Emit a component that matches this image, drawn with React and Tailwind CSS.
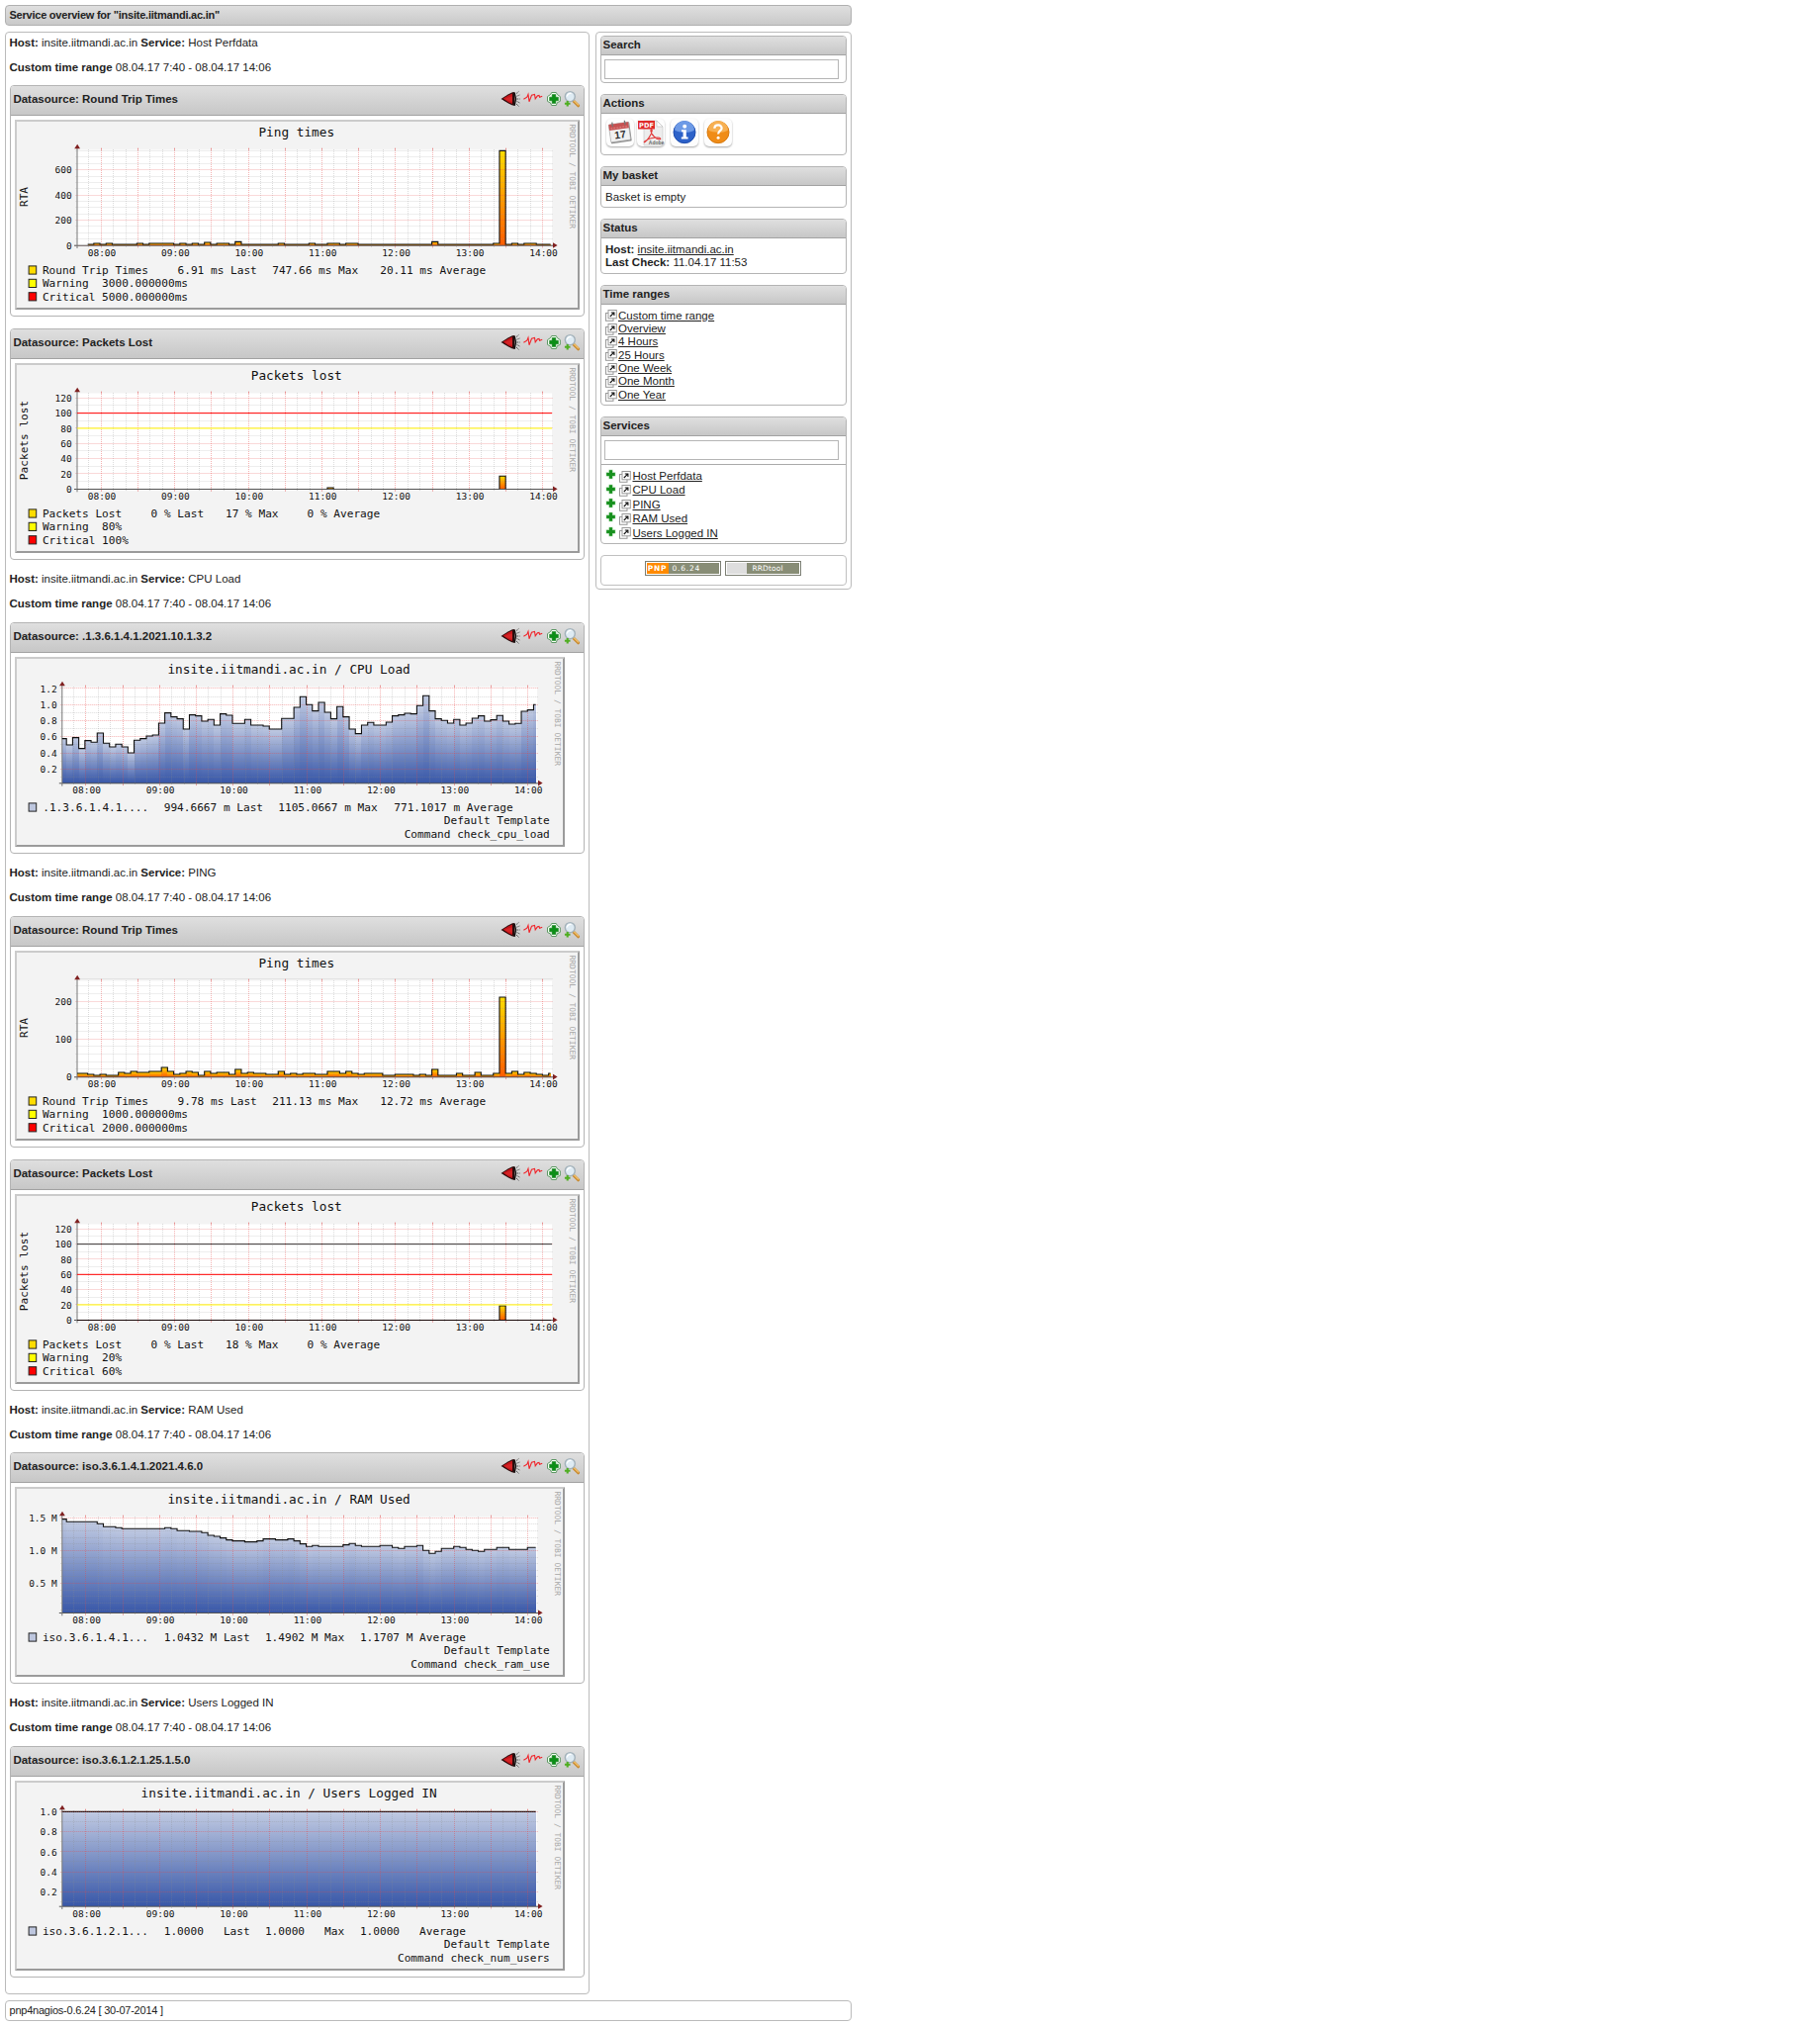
import React from "react";

const HOURS = ["08:00", "09:00", "10:00", "11:00", "12:00", "13:00", "14:00"];
const MONO = "'DejaVu Sans Mono', monospace";
const STEP = 6.214;

/* Height samples, in thirds of a pixel above the zero line, one per five minutes. */
const cpuSamples = [
  381, 400, 378, 411, 387, 392, 364, 395, 406, 398, 406, 424, 386, 381, 373, 370, 334, 303, 315, 321, 352, 309, 312,
  328, 323, 340, 306, 310, 335, 335, 323, 340, 340, 343, 352, 352, 320, 320, 286, 254, 278, 297, 271, 301, 321, 284,
  315, 352, 366, 340, 332, 340, 340, 331, 312, 309, 304, 306, 281, 251, 297, 321, 326, 334, 323, 340, 334, 319, 312,
  328, 324, 311, 328, 337, 335, 298, 294, 278,
].map((v) => 516 - v);
const ramSamples = [
  197, 205, 205, 205, 205, 205, 211, 220, 220, 223, 226, 226, 226, 226, 226, 226, 226, 223, 226, 232, 232, 234, 234,
  238, 246, 249, 254, 260, 263, 263, 266, 266, 263, 257, 257, 260, 260, 257, 263, 272, 280, 277, 280, 280, 280, 280,
  275, 271, 277, 280, 280, 280, 277, 277, 283, 286, 280, 280, 277, 292, 301, 295, 286, 286, 280, 283, 289, 292, 295,
  289, 289, 283, 283, 289, 289, 289, 283, 283,
].map((v) => 481 - v);
const pingSamples = [
  493, 493, 496, 499, 496, 499, 499, 490, 493, 487, 490, 490, 487, 487, 475, 487, 496, 493, 487, 490, 499, 487, 493,
  490, 490, 496, 481, 493, 490, 493, 493, 496, 496, 487, 496, 493, 496, 493, 493, 496, 496, 487, 487, 493, 487, 493,
  496, 493, 493, 493, 499, 499, 496, 496, 496, 499, 496, 499, 481, 499, 499, 499, 493, 499, 499, 490, 499, 499, 493,
  262, 493, 487, 496, 490, 493, 496, 499, 493,
].map((v) => 504 - v);

function sparse(base, skip, peaks) {
  return Array.from({ length: 78 }, (_, i) => {
    if (i < skip) return null;
    return peaks[i] !== undefined ? peaks[i] : base;
  });
}
const hostPing = sparse(3, 2, {
  3: 6, 5: 6, 10: 6, 12: 6, 13: 6, 14: 6, 15: 6, 17: 6, 19: 6, 21: 9, 23: 6, 24: 6, 26: 11, 33: 6, 38: 6, 41: 6,
  42: 6, 44: 6, 45: 6, 58: 11, 68: 6, 69: 287, 71: 6, 73: 6, 74: 6,
});
const hostLoss = sparse(0, 2, { 41: 4, 69: 39 });
const pingLoss = sparse(0, 0, { 69: 43 });
const users = Array.from({ length: 78 }, () => 287);

const WARM = { top: "#ffdc00", bottom: "#ff5c00" };
const COOL = { top: "#c0cae2", bottom: "#3857a8" };

const yellowRed = (w, c) => [
  ["#ffff00", `Warning  ${w}`],
  ["#ff0000", `Critical ${c}`],
];

const charts = {
  hostPing: {
    title: "Ping times", axis: "RTA", wide: true, zero: 127, unit: 25.45 / 200, minor: 50, major: 200, max: 750,
    labels: [0, 200, 400, 600], data: hostPing, ramp: WARM, swatch: "#ffdc00",
    parts: [[27.9, "Round Trip Times"], [164.5, "6.91 ms Last"], [260.2, "747.66 ms Max"], [369.2, "20.11 ms Average"]],
    extra: yellowRed("3000.000000ms", "5000.000000ms"),
  },
  hostLoss: {
    title: "Packets lost", axis: "Packets lost", wide: true, zero: 127.3, unit: 15.33 / 20, minor: 10, major: 20, max: 120,
    labels: [0, 20, 40, 60, 80, 100, 120], data: hostLoss, ramp: WARM, swatch: "#ffdc00",
    rules: [[100, "#ff0000"], [80, "#ffff00"]], baseline: "#555",
    parts: [[27.9, "Packets Lost"], [137.6, "0 % Last"], [213, "17 % Max"], [295.6, "0 % Average"]],
    extra: yellowRed("80%", "100%"),
  },
  cpu: {
    title: "insite.iitmandi.ac.in / CPU Load", zero: 127.6, offset: -0.024, unit: 16.27 / 0.2, minor: 0.1, major: 0.2, max: 1.2,
    labels: [0.2, 0.4, 0.6, 0.8, 1.0, 1.2], data: cpuSamples, ramp: COOL, swatch: "#bdc6de",
    parts: [[28.2, ".1.3.6.1.4.1...."], [150.7, "994.6667 m Last"], [266.3, "1105.0667 m Max"], [383.3, "771.1017 m Average"]],
    right: ["Default Template", "Command check_cpu_load"],
  },
  ping: {
    title: "Ping times", axis: "RTA", wide: true, zero: 127.6, unit: 38.3 / 100, minor: 20, major: 100, max: 250,
    labels: [0, 100, 200], data: pingSamples, ramp: WARM, swatch: "#ffdc00",
    parts: [[27.9, "Round Trip Times"], [164.5, "9.78 ms Last"], [260.2, "211.13 ms Max"], [369.2, "12.72 ms Average"]],
    extra: yellowRed("1000.000000ms", "2000.000000ms"),
  },
  pingLoss: {
    title: "Packets lost", axis: "Packets lost", wide: true, zero: 127.3, unit: 15.33 / 20, minor: 10, major: 20, max: 120,
    labels: [0, 20, 40, 60, 80, 100, 120], data: pingLoss, ramp: WARM, swatch: "#ffdc00",
    rules: [[100, "#333333"], [60, "#ff0000"], [20, "#ffff00"]], baseline: "#1a0a0a",
    parts: [[27.9, "Packets Lost"], [137.6, "0 % Last"], [213, "18 % Max"], [295.6, "0 % Average"]],
    extra: yellowRed("20%", "60%"),
  },
  ram: {
    title: "insite.iitmandi.ac.in / RAM Used", zero: 127.3, offset: -0.053, unit: 33.2 / 0.5, minor: 0.1, major: 0.5, max: 1.5,
    labels: [0.5, 1.0, 1.5], suffix: " M", data: ramSamples, ramp: COOL, swatch: "#bdc6de",
    parts: [[27.9, "iso.3.6.1.4.1..."], [150.7, "1.0432 M Last"], [252.9, "1.4902 M Max"], [348.9, "1.1707 M Average"]],
    right: ["Default Template", "Command check_ram_use"],
  },
  users: {
    title: "insite.iitmandi.ac.in / Users Logged IN", zero: 127, offset: -0.055, unit: 20.25 / 0.2, minor: 0.1, major: 0.2, max: 1.0,
    labels: [0.2, 0.4, 0.6, 0.8, 1.0], data: users, ramp: COOL, swatch: "#bdc6de",
    parts: [[27.9, "iso.3.6.1.2.1..."], [150.7, "1.0000   Last"], [252.9, "1.0000   Max"], [348.9, "1.0000   Average"]],
    right: ["Default Template", "Command check_num_users"],
  },
};

function Mono({ x, y, adv, anchor, fill = "#111", children, transform }) {
  const text = String(children);
  return (
    <text
      x={x}
      y={y}
      transform={transform}
      fontFamily={MONO}
      fontSize={adv / 0.602}
      textAnchor={anchor}
      fill={fill}
      className="whitespace-pre"
    >
      {text}
    </text>
  );
}

function Chart({ id }) {
  const c = charts[id];
  const w = c.wide ? 571 : 556;
  const left = c.wide ? 63 : 47.8;
  const right = c.wide ? 542 : 527;
  const first = left + 4.4;
  const eight = c.wide ? 87.2 : 71.9;
  const top = 30.5;
  const zero = c.zero;
  const yOf = (v) => zero - (v + (c.offset || 0)) * c.unit;
  const decimals = c.offset ? 1 : 0;
  const labelRight = c.wide ? 57.8 : 42.8;

  const vlines = [];
  for (let m = -10; m <= 360; m += 10) {
    vlines.push({ x: Math.round(eight + (m * 74.42) / 60 - 0.5) + 0.5, red: m % 30 === 0 });
  }
  const hlines = [];
  const n = Math.round(c.max / c.minor);
  for (let i = 0; i <= n; i++) {
    const v = i * c.minor;
    if (i === 0 && c.offset) continue;
    hlines.push({ y: Math.round(yOf(v) - 0.5) + 0.5, red: i % Math.round(c.major / c.minor) === 0 });
  }

  const cols = c.data.map((v, i) => ({
    v,
    x: i === 0 ? left : first + (i - 1) * STEP,
    x2: Math.min(i === 77 ? right - 0.4 : first + i * STEP, right - 0.4),
  }));
  const shown = cols.filter((s) => s.v !== null);
  const line = shown.map((s, i) => `${i ? "L" : "M"}${s.x} ${zero - s.v / 3}L${s.x2} ${zero - s.v / 3}`).join("");

  return (
    <svg width={w} height="192" viewBox={`0 0 ${w} 192`} className="block">
      <defs>
        <linearGradient id={`g-${id}`} x1="0" y1="0" x2="0" y2="1">
          <stop offset="0" stopColor={c.ramp.top} />
          <stop offset="1" stopColor={c.ramp.bottom} />
        </linearGradient>
      </defs>
      <rect width={w} height="192" fill="#f3f3f3" />
      <path d={`M0 192V0H${w}L${w - 2} 2H2V190Z`} fill="#cbcbcb" />
      <path d={`M0 192H${w}V0L${w - 2} 2V190H2Z`} fill="#9b9b9b" />

      <rect x={left} y={top} width={right + 1 - left} height={zero - top} fill="#fff" />
      {shown.filter((s) => s.v > 0).map((s) => (
        <rect key={s.x} x={s.x} y={zero - s.v / 3} width={s.x2 - s.x} height={s.v / 3} fill={`url(#g-${id})`} shapeRendering="crispEdges" />
      ))}

      {vlines.map((l) => (
        <line
          key={l.x}
          x1={l.x} x2={l.x} y1={top - (l.red ? 1.5 : 0.5)} y2={zero + 2}
          stroke={l.red ? "#e84848" : "#8c8c8c"} strokeOpacity={l.red ? 0.42 : 0.3} strokeDasharray="1 1"
        />
      ))}
      {hlines.map((l) => (
        <line
          key={l.y}
          x1={left - 1.5} x2={right + 2} y1={l.y} y2={l.y}
          stroke={l.red ? "#e84848" : "#8c8c8c"} strokeOpacity={l.red ? 0.42 : 0.3} strokeDasharray="1 1"
        />
      ))}
      {vlines.filter((l) => l.red).map((l) => (
        <path key={l.x} d={`M${l.x} ${top - 2}v2.5M${l.x} ${zero - 1}v3.5`} stroke="#e06060" strokeOpacity="0.45" />
      ))}

      <line x1={left - 3} x2={right + 4} y1={zero + 0.2} y2={zero + 0.2} stroke="#555" />
      <line x1={left} x2={left} y1={zero + 3} y2={top - 3} stroke="#777" />
      {c.baseline && <line x1={left} x2={right} y1={zero + 0.2} y2={zero + 0.2} stroke={c.baseline} />}
      {!c.baseline && <path d={line} fill="none" stroke="#111" strokeWidth="1.1" />}
      {c.baseline && shown.filter((s) => s.v > 0).map((s) => (
        <path key={s.x} d={`M${s.x} ${zero}V${zero - s.v / 3}H${s.x2}V${zero}`} fill="none" stroke="#111" strokeWidth="1.1" />
      ))}
      {id === "users" && <line x1={left} x2={right} y1="31.3" y2="31.3" stroke="#c04040" strokeOpacity="0.6" strokeDasharray="1 1" />}
      {(c.rules || []).map(([v, color]) => (
        <line key={v} x1={left} x2={right + 1} y1={yOf(v)} y2={yOf(v)} stroke={color} />
      ))}
      <path d={`M${left - 2.8} 29.2L${left + 0.2} 24.8L${left + 3} 29.2Z`} fill="#802020" />
      <path d={`M${right + 2} ${zero - 2.8}L${right + 6.6} ${zero}L${right + 2} ${zero + 2.8}Z`} fill="#802020" />

      <Mono x={w / 2 - (c.wide ? 0.7 : 0.9)} y="17" adv={7.67} anchor="middle">{c.title}</Mono>
      {c.labels.map((v) => (
        <Mono key={v} x={labelRight} y={yOf(v) + 3.7} adv={5.74} anchor="end">{v.toFixed(decimals) + (c.suffix || "")}</Mono>
      ))}
      {HOURS.map((h, i) => (
        <Mono key={h} x={eight + 0.8 + i * 74.42} y="138.2" adv={5.74} anchor="middle">{h}</Mono>
      ))}
      {c.axis && <Mono transform="translate(13 78) rotate(-90)" adv={6.69} anchor="middle">{c.axis}</Mono>}
      <Mono transform={`translate(${w - 10} 4.5) rotate(90)`} adv={4.8} fill="#a8a8a8">RRDTOOL / TOBI OETIKER</Mono>

      <rect x="14.1" y="147.9" width="7.6" height="8.2" fill={c.swatch} stroke="#222" />
      {c.parts.map(([x, t]) => (
        <Mono key={t} x={x} y="155.8" adv={6.69}>{t}</Mono>
      ))}
      {(c.extra || []).map(([color, t], i) => (
        <g key={t}>
          <rect x="14.1" y={161.3 + i * 13.4} width="7.6" height="8.2" fill={color} stroke="#222" />
          <Mono x="27.9" y={169.4 + i * 13.4} adv={6.69}>{t}</Mono>
        </g>
      ))}
      {(c.right || []).map((t, i) => (
        <Mono key={t} x="540.8" y={169.3 + i * 13.4} adv={6.69} anchor="end">{t}</Mono>
      ))}
    </svg>
  );
}

function HeaderIcons() {
  return (
    <svg width="82" height="18" viewBox="0 0 82 18" className="block">
      <path d="M.5 9L8 4.2L12 2.2L14.5 2V16L11.5 15.3L8 13.5Z" fill="#2a0c0c" />
      <path d="M2.5 8.6L8.5 4.9L12 3.6V14L8.2 12.4Z" fill="#c4141a" />
      <path d="M4 9L9 7L12 6.5V12L8 11Z" fill="#df2f2f" opacity=".6" />
      <path d="M14.2 3L15.6 9L14.2 15.6" fill="none" stroke="#111" strokeWidth="1.3" />
      <path d="M16 3.6L19 1M16.6 6.2L19.4 5M16.8 9H19.6M16.6 11.4L19.4 13M16 14L19 17" stroke="#333" strokeWidth=".9" strokeDasharray="1.2 .8" />
      <path d="M23.4 9.3L26.8 7.2L28 4.3L29 11.8L31.5 5.2L34.5 4.5L35.2 8.8L37.4 5.8L39 5.5L39.6 7.3L42.2 6.3" fill="none" stroke="#f0242a" strokeWidth="1.1" />
      <path d="M51.7 2.5H56.3L57.3 4.5L60.3 6.6V11.4L57.3 12.7L56.3 15.5H51.7L50.6 13L47.5 11.4V6.6L50.6 4.5Z" fill="#f4fff4" stroke="#4f8f57" strokeWidth=".9" />
      <path d="M52.2 4.6H55.8V7.2H58.4V10.8H55.8V13.4H52.2V10.8H49.6V7.2H52.2Z" fill="#0b8f16" stroke="#087010" strokeWidth=".5" />
      <path d="M73 10.2L78.6 15.8" stroke="#c8892e" strokeWidth="3" strokeLinecap="round" />
      <path d="M73.2 9.8L78.6 15" stroke="#f0c06a" strokeWidth="1.2" strokeLinecap="round" />
      <circle cx="70.3" cy="6.6" r="5" fill="#deebf3" stroke="#a4b2ba" strokeWidth="1.4" />
      <path d="M67.4 6.4A3 3 0 0 1 71.5 3.6" fill="none" stroke="#fff" strokeWidth="1.3" />
      <path d="M67.7 10.9V16.5M64.9 13.7H70.5" stroke="#4fae22" strokeWidth="2.1" />
    </svg>
  );
}

function Graph({ source, chart, className = "" }) {
  return (
    <section className={`h-[234px] rounded-[4px] border border-[#b4b4b4] bg-white ${className}`}>
      <header className="flex h-[30px] items-center justify-between rounded-t-[3px] border-b border-[#a2a2a2] bg-linear-to-b from-[#dfdfdf] to-[#c7c7c7] pb-[3px] pl-[2.4px] pr-[2px]">
        <h2 className="text-[11.5px] font-bold">Datasource: {source}</h2>
        <div className="-mt-px">
          <HeaderIcons />
        </div>
      </header>
      <div className="pl-1 pt-1">
        <Chart id={chart} />
      </div>
    </section>
  );
}

function Service({ name, className }) {
  return (
    <div className={`-ml-[0.6px] flex flex-col ${className}`}>
      <p><b>Host:</b> insite.iitmandi.ac.in <b>Service:</b> {name}</p>
      <p className="mt-[11px]"><b>Custom time range</b> 08.04.17 7:40 - 08.04.17 14:06</p>
    </div>
  );
}

function Widget({ title, className, children }) {
  return (
    <section className={`overflow-hidden rounded-[4px] border border-[#b4b4b4] bg-white ${className}`}>
      <h3 className="h-[19px] border-b border-[#a2a2a2] bg-linear-to-b from-[#dfdfdf] to-[#c7c7c7] pl-[1.5px] text-[11.5px] font-bold leading-[17px]">
        {title}
      </h3>
      {children}
    </section>
  );
}

function LinkIcon() {
  return (
    <svg width="12" height="12" viewBox="0 0 12 12" className="shrink-0">
      <rect x=".5" y="3.5" width="7.5" height="7.8" fill="#fff" stroke="#999" />
      <rect x="3" y=".5" width="8.3" height="8.3" fill="#fff" stroke="#999" />
      <path d="M4.8 7L8.2 3.6M5.8 3H8.9V6.1" fill="none" stroke="#111" strokeWidth="1.1" />
    </svg>
  );
}

function PlusIcon() {
  return (
    <svg width="11" height="11" viewBox="0 0 11 11" className="shrink-0">
      <path d="M3.4 .7H7.6V2.2L8.6 3.2H10.3V7.4H8.8L7.6 8.6V10.3H3.4V8.6L2.2 7.4H.7V3.2H2.4L3.4 2.2Z" fill="#a9d8ab" />
      <path d="M4 1.2H7V4H9.8V7H7V9.8H4V7H1.2V4H4Z" fill="#18911f" />
    </svg>
  );
}

function Tile({ className = "", children }) {
  return (
    <div className={`h-[28px] w-[28px] rounded-[5px] bg-[#fdfdfd] shadow-[0_1px_2px_rgba(0,0,0,0.35)] ${className}`}>
      <svg width="28" height="28" viewBox="0 0 28 28" className="block">{children}</svg>
    </div>
  );
}

function Actions() {
  return (
    <div className="flex pl-[5px] pt-[5px]">
      <Tile>
        <g transform="rotate(-8 14 14)">
          <rect x="3.5" y="4.5" width="21" height="19.5" rx="1" fill="#8d8d8d" />
          <rect x="3.5" y="4.5" width="20" height="18" rx="1" fill="#f1f1f1" stroke="#aaa" strokeWidth=".6" />
          <rect x="3.5" y="4.5" width="20" height="6" fill="#c65252" />
          <path d="M5 8.7H22" stroke="#dc8787" strokeDasharray="2 1" />
          <path d="M7.3 2.5V7M20 2.5V7" stroke="#777" strokeWidth="1.3" />
          <text x="13.7" y="19.8" textAnchor="middle" fontFamily="'Liberation Sans', sans-serif" fontWeight="700" fontSize="10.5" fill="#333">17</text>
        </g>
      </Tile>
      <Tile className="ml-[3px]">
        <path d="M7 2H20L26 8V27H7Z" fill="#ededed" stroke="#c8c8c8" strokeWidth=".7" />
        <path d="M20 2V8H26Z" fill="#fff" stroke="#b9b9b9" strokeWidth=".6" />
        <rect x="1" y="2" width="17" height="8.5" fill="#e02a2a" />
        <text x="9.5" y="9" textAnchor="middle" fontFamily="'DejaVu Sans', sans-serif" fontWeight="700" fontSize="6.6" fill="#fff">PDF</text>
        <path d="M8 23.5C10 22.5 15 16 15.2 12C15.2 9.8 13.6 10.4 14 12.5C15 17 19 20.5 23 21C24.5 20.8 23.5 19 21 19C16 19 11 20.8 8.4 22.4C7 23.5 7 24.2 8 23.5Z" fill="none" stroke="#e23b3b" strokeWidth="1.2" />
        <text x="19.6" y="25.8" textAnchor="middle" fontFamily="'Liberation Sans', sans-serif" fontWeight="700" fontSize="5" fill="#666">Adobe</text>
      </Tile>
      <Tile className="ml-[5.5px]">
        <circle cx="14" cy="13.7" r="11" fill="#2d62c9" stroke="#1d4cad" />
        <path d="M4 11.5A10 9.6 0 0 1 24 11.5C20 15 8 14 4 11.5Z" fill="#6d9ae6" />
        <circle cx="14.2" cy="7.8" r="2" fill="#fff" />
        <path d="M11 11.2H15.8V18.4H17.6V20.4H10.8V18.4H12.6V13.2H11Z" fill="#fff" />
      </Tile>
      <Tile className="ml-[6px]">
        <circle cx="14" cy="13.7" r="11" fill="#f08c17" stroke="#d77a10" />
        <path d="M4 11.5A10 9.6 0 0 1 24 11.5C20 15 8 14 4 11.5Z" fill="#f7b052" />
        <path d="M10.3 9.8C10.5 5.2 18 5.4 17.6 9.8C17.3 12.3 14.1 12.3 14.1 15.6" fill="none" stroke="#fff" strokeWidth="2.2" />
        <circle cx="14.1" cy="19.2" r="1.5" fill="#fff" />
      </Tile>
    </div>
  );
}

function Badge({ tag, label }) {
  return (
    <div className="h-[15px] w-[77px] border border-[#7c7f74] bg-white p-px">
      <div className="flex h-full bg-[#888d76] font-['DejaVu_Sans'] text-[7.5px] font-bold leading-[11px] text-white">
        <span className={tag ? "w-[22px] bg-[#ff8a00] text-center tracking-[0.8px]" : "w-[20px] bg-[#dedede]"}>{tag}</span>
        <span className={tag ? "ml-px pl-[3px] font-normal tracking-[0.8px]" : "pl-[6px] font-normal tracking-[0.1px]"}>{label}</span>
      </div>
    </div>
  );
}

const ranges = ["Custom time range", "Overview", "4 Hours", "25 Hours", "One Week", "One Month", "One Year"];
const services = ["Host Perfdata", "CPU Load", "PING", "RAM Used", "Users Logged IN"];

export default function App() {
  return (
    <div className="h-[2048px] w-full bg-white pl-[5px] pt-[5px] font-['Liberation_Sans',sans-serif] text-[11.5px] leading-[14px] text-[#222]">
      <div className="w-[856px]">
        <h1 className="h-[21px] rounded-[4px] border border-[#b0b0b0] bg-linear-to-b from-[#dfdfdf] to-[#c9c9c9] pl-[3.5px] text-[11px] font-bold leading-[19px] tracking-[-0.23px]">
          Service overview for "insite.iitmandi.ac.in"
        </h1>
        <div className="mt-[6px] flex items-start justify-between">
          <main className="h-[1984px] w-[591px] rounded-[4px] border border-[#bbb] px-[4px]">
            <Service name="Host Perfdata" className="h-[53px] pt-[3px]" />
            <Graph source="Round Trip Times" chart="hostPing" />
            <Graph source="Packets Lost" chart="hostLoss" className="mt-[12px]" />
            <Service name="CPU Load" className="h-[63px] pt-[12px]" />
            <Graph source=".1.3.6.1.4.1.2021.10.1.3.2" chart="cpu" />
            <Service name="PING" className="h-[63px] pt-[12px]" />
            <Graph source="Round Trip Times" chart="ping" />
            <Graph source="Packets Lost" chart="pingLoss" className="mt-[12px]" />
            <Service name="RAM Used" className="h-[62px] pt-[12px]" />
            <Graph source="iso.3.6.1.4.1.2021.4.6.0" chart="ram" />
            <Service name="Users Logged IN" className="h-[63px] pt-[12px]" />
            <Graph source="iso.3.6.1.2.1.25.1.5.0" chart="users" />
          </main>

          <aside className="h-[564px] w-[259px] rounded-[4px] border border-[#bbb] px-[4px] pt-[3px] text-[11.5px] leading-[13.4px]">
            <Widget title="Search" className="h-[48px]">
              <div className="ml-[3px] mt-[4px] h-[20px] w-[237px] border border-[#b5b5b5]" />
            </Widget>
            <Widget title="Actions" className="mt-[11px] h-[62px]">
              <Actions />
            </Widget>
            <Widget title="My basket" className="mt-[11px] h-[42px]">
              <p className="pl-[4px] pt-[5px]">Basket is empty</p>
            </Widget>
            <Widget title="Status" className="mt-[11px] h-[56px]">
              <p className="pl-[4px] pt-[5px]">
                <b>Host:</b> <span className="underline">insite.iitmandi.ac.in</span>
                <br />
                <b>Last Check:</b> 11.04.17 11:53
              </p>
            </Widget>
            <Widget title="Time ranges" className="mt-[11px] h-[122px]">
              <ul className="pl-[3.5px] pt-[4.5px]">
                {ranges.map((r) => (
                  <li key={r} className="flex h-[13.4px] items-center gap-[1.5px]">
                    <LinkIcon />
                    <span className="underline">{r}</span>
                  </li>
                ))}
              </ul>
            </Widget>
            <Widget title="Services" className="mt-[11px] h-[129px]">
              <div className="h-[29px] border-b border-[#aaa] pl-[3px] pt-[4px]">
                <div className="h-[20px] w-[237px] border border-[#b5b5b5]" />
              </div>
              <ul className="pl-[3.5px] pt-[4.6px]">
                {services.map((s) => (
                  <li key={s} className="flex h-[14.4px] items-center">
                    <div className="-mt-[4px]">
                      <PlusIcon />
                    </div>
                    <div className="ml-[3.5px] mr-[1.5px]">
                      <LinkIcon />
                    </div>
                    <span className="underline">{s}</span>
                  </li>
                ))}
              </ul>
            </Widget>
            <div className="mt-[11px] flex h-[31px] justify-center gap-[4px] rounded-[4px] border border-[#c0c0c0] pr-[2px] pt-[5px]">
              <Badge tag="PNP" label="0.6.24" />
              <Badge label="RRDtool" />
            </div>
          </aside>
        </div>
        <footer className="mt-[6px] h-[21px] rounded-[4px] border border-[#bbb] pl-[3.5px] text-[11px] leading-[19px] tracking-[-0.23px]">
          pnp4nagios-0.6.24 [ 30-07-2014 ]
        </footer>
      </div>
    </div>
  );
}
